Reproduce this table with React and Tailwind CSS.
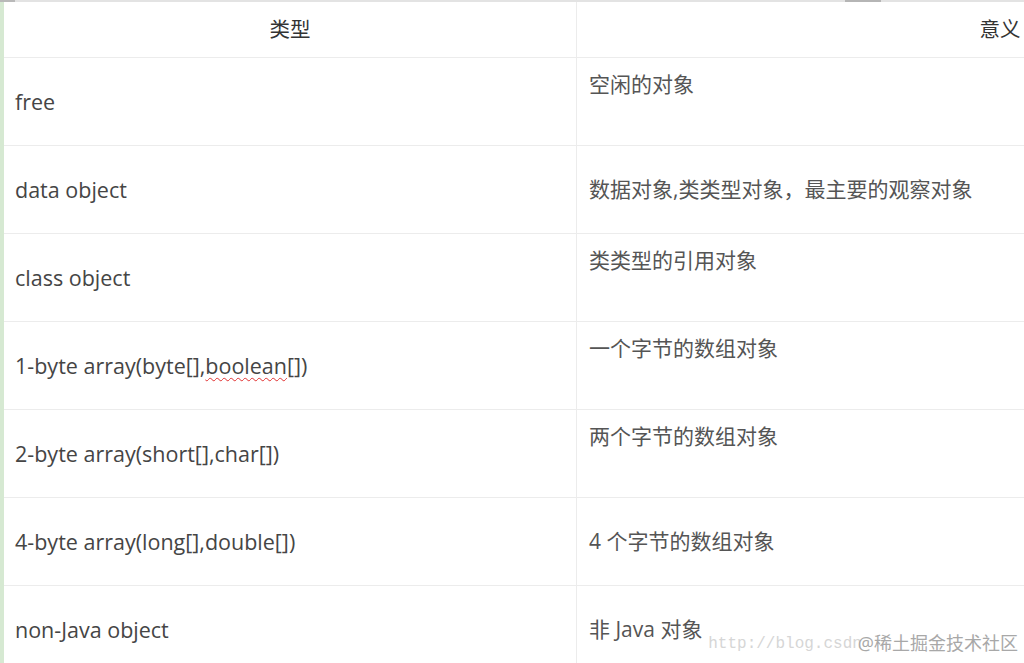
import React from 'react';

const rows = [
    { type: 'free', meaning: '空闲的对象', top: true },
    { type: 'data object', meaning: '数据对象,类类型对象，最主要的观察对象' },
    { type: 'class object', meaning: '类类型的引用对象', top: true },
    { type: '1-byte array', meaning: '一个字节的数组对象', top: true, spell: true },
    { type: '2-byte array(short[],char[])', meaning: '两个字节的数组对象', top: true },
    { type: '4-byte array(long[],double[])', meaning: '4 个字节的数组对象' },
    { type: 'non-Java object', meaning: '非 Java 对象' },
];

const font = { fontFamily: '"Open Sans", "Noto Sans CJK SC", sans-serif' };

const App = () => {
    return (
        <div className="relative w-[1024px] h-[663px] overflow-hidden bg-white" style={font}>
            {/* top rule */}
            <div className="flex h-[2px] bg-[#e3e3e3]">
                <div className="w-[15px] bg-[#b9b9b9]" />
                <div className="w-[830px]" />
                <div className="w-[36px] bg-[#b5b5b5]" />
            </div>

            <div className="flex">
                <div className="w-[4px] shrink-0 bg-[#d6e9d2]" />

                <div className="flex flex-col shrink-0">
                    {/* header */}
                    <div className="flex h-[56px] border-b border-[#ececec]">
                        <div className="w-[573px] shrink-0 border-r border-[#ececec] flex items-center justify-center text-[20.5px] text-[#333]">
                            类型
                        </div>
                        <div className="w-[846px] shrink-0 flex items-center justify-center text-[20.5px] text-[#333]">
                            意义
                        </div>
                    </div>

                    {rows.map((row) => (
                        <div key={row.type} className="flex h-[88px] border-b border-[#ececec]">
                            <div className="w-[573px] shrink-0 border-r border-[#ececec] flex items-center pl-[11px] pt-[2px] text-[21.5px] text-[#454545]">
                                {row.spell ? (
                                    <span>
                                        1-byte array(byte[],
                                        <span className="underline decoration-wavy decoration-[#e03030] decoration-1 underline-offset-[3px]">
                                            boolean
                                        </span>
                                        [])
                                    </span>
                                ) : (
                                    row.type
                                )}
                            </div>
                            <div
                                className={
                                    row.top
                                        ? 'w-[846px] shrink-0 flex items-start pt-[11px] pl-[12px] text-[21px] text-[#555]'
                                        : 'w-[846px] shrink-0 flex items-center pl-[12px] text-[21px] text-[#555]'
                                }
                            >
                                {row.meaning}
                            </div>
                        </div>
                    ))}
                </div>
            </div>

            {/* watermark */}
            <div className="absolute right-[6px] bottom-[6px] flex items-center">
                <span
                    className="text-[16px] text-[#d6d6d6]"
                    style={{ fontFamily: '"Liberation Mono", "DejaVu Sans Mono", monospace' }}
                >
                    http://blog.csdn
                </span>
                <span className="text-[18px] text-[#a8a8a8] -ml-[4px]">@稀土掘金技术社区</span>
            </div>
        </div>
    );
};

export default App;
